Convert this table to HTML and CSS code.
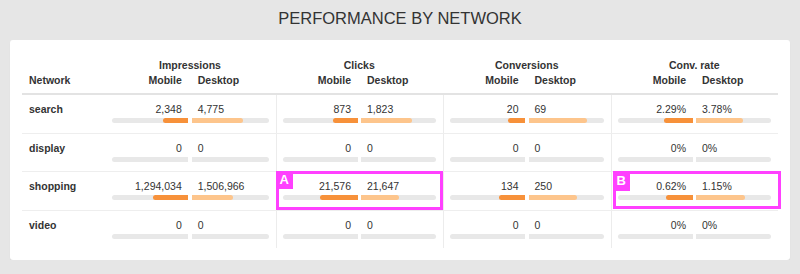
FILE: index.html
```html
<!DOCTYPE html>
<html>
<head>
<meta charset="utf-8">
<title>Performance by network</title>
<link rel="stylesheet" href="styles.css">
</head>
<body>
<h1 class="title">PERFORMANCE BY NETWORK</h1>
<div class="card">
  <div class="grid head">
    <div class="net-h">Network</div>
    <div class="grp first">
      <div class="grp-title">Impressions</div>
      <div class="pair"><div class="m">Mobile</div><div class="d">Desktop</div></div>
    </div>
    <div class="grp">
      <div class="grp-title">Clicks</div>
      <div class="pair"><div class="m">Mobile</div><div class="d">Desktop</div></div>
    </div>
    <div class="grp">
      <div class="grp-title">Conversions</div>
      <div class="pair"><div class="m">Mobile</div><div class="d">Desktop</div></div>
    </div>
    <div class="grp">
      <div class="grp-title">Conv. rate</div>
      <div class="pair"><div class="m">Mobile</div><div class="d">Desktop</div></div>
    </div>
  </div>

  <div class="grid row">
    <div class="net">search</div>
    <div class="grp first"><div class="pair">
      <div><div class="val m">2,348</div><div class="track tm"><div class="fill fm" style="width:32.96%"></div></div></div>
      <div><div class="val d">4,775</div><div class="track td"><div class="fill fd" style="width:67.04%"></div></div></div>
    </div></div>
    <div class="grp"><div class="pair">
      <div><div class="val m">873</div><div class="track tm"><div class="fill fm" style="width:32.38%"></div></div></div>
      <div><div class="val d">1,823</div><div class="track td"><div class="fill fd" style="width:67.62%"></div></div></div>
    </div></div>
    <div class="grp"><div class="pair">
      <div><div class="val m">20</div><div class="track tm"><div class="fill fm" style="width:22.47%"></div></div></div>
      <div><div class="val d">69</div><div class="track td"><div class="fill fd" style="width:77.53%"></div></div></div>
    </div></div>
    <div class="grp"><div class="pair">
      <div><div class="val m">2.29%</div><div class="track tm"><div class="fill fm" style="width:37.73%"></div></div></div>
      <div><div class="val d">3.78%</div><div class="track td"><div class="fill fd" style="width:62.27%"></div></div></div>
    </div></div>
  </div>

  <div class="grid row">
    <div class="net">display</div>
    <div class="grp first"><div class="pair">
      <div><div class="val m">0</div><div class="track tm"></div></div>
      <div><div class="val d">0</div><div class="track td"></div></div>
    </div></div>
    <div class="grp"><div class="pair">
      <div><div class="val m">0</div><div class="track tm"></div></div>
      <div><div class="val d">0</div><div class="track td"></div></div>
    </div></div>
    <div class="grp"><div class="pair">
      <div><div class="val m">0</div><div class="track tm"></div></div>
      <div><div class="val d">0</div><div class="track td"></div></div>
    </div></div>
    <div class="grp"><div class="pair">
      <div><div class="val m">0%</div><div class="track tm"></div></div>
      <div><div class="val d">0%</div><div class="track td"></div></div>
    </div></div>
  </div>

  <div class="grid row">
    <div class="net">shopping</div>
    <div class="grp first"><div class="pair">
      <div><div class="val m">1,294,034</div><div class="track tm"><div class="fill fm" style="width:46.2%"></div></div></div>
      <div><div class="val d">1,506,966</div><div class="track td"><div class="fill fd" style="width:53.8%"></div></div></div>
    </div></div>
    <div class="grp noted"><div class="pair">
      <div><div class="val m">21,576</div><div class="track tm"><div class="fill fm" style="width:49.92%"></div></div></div>
      <div><div class="val d">21,647</div><div class="track td"><div class="fill fd" style="width:50.08%"></div></div></div>
    </div>
      <div class="note note-a"><span class="tag">A</span></div>
    </div>
    <div class="grp"><div class="pair">
      <div><div class="val m">134</div><div class="track tm"><div class="fill fm" style="width:34.9%"></div></div></div>
      <div><div class="val d">250</div><div class="track td"><div class="fill fd" style="width:65.1%"></div></div></div>
    </div></div>
    <div class="grp noted"><div class="pair">
      <div><div class="val m">0.62%</div><div class="track tm"><div class="fill fm" style="width:35.03%"></div></div></div>
      <div><div class="val d">1.15%</div><div class="track td"><div class="fill fd" style="width:64.97%"></div></div></div>
    </div>
      <div class="note note-b"><span class="tag tag-b">B</span></div>
    </div>
  </div>

  <div class="grid row last">
    <div class="net">video</div>
    <div class="grp first"><div class="pair">
      <div><div class="val m">0</div><div class="track tm"></div></div>
      <div><div class="val d">0</div><div class="track td"></div></div>
    </div></div>
    <div class="grp"><div class="pair">
      <div><div class="val m">0</div><div class="track tm"></div></div>
      <div><div class="val d">0</div><div class="track td"></div></div>
    </div></div>
    <div class="grp"><div class="pair">
      <div><div class="val m">0</div><div class="track tm"></div></div>
      <div><div class="val d">0</div><div class="track td"></div></div>
    </div></div>
    <div class="grp"><div class="pair">
      <div><div class="val m">0%</div><div class="track tm"></div></div>
      <div><div class="val d">0%</div><div class="track td"></div></div>
    </div></div>
  </div>
</div>
</body>
</html>
```

FILE: styles.css
```css
* { box-sizing: border-box; }

html, body {
  margin: 0;
  padding: 0;
  background: #e6e6e6;
  font-family: "Liberation Sans", Arial, Helvetica, sans-serif;
  font-size: 10.5px;
  color: #333;
}

.title {
  margin: 0;
  height: 40px;
  line-height: 37px;
  text-align: center;
  font-size: 16.5px;
  font-weight: normal;
  color: #333;
}

.card {
  margin: 0 10px;
  background: #fff;
  border-radius: 3px;
  box-shadow: 0 1px 1px rgba(0, 0, 0, 0.08);
  padding: 12px 12px 12px 12px;
}

.grid {
  display: grid;
  grid-template-columns: 86px repeat(4, 1fr);
}

.head {
  padding: 6px 0 6px;
  border-bottom: 2px solid #e3e3e3;
  font-weight: bold;
  line-height: 14px;
}

.net-h {
  align-self: end;
  padding-left: 7px;
}

.grp {
  border-left: 1px solid #ececec;
  padding: 0 7px 0 6px;
}

.head .grp { border-left-color: transparent; }

.grp.first {
  border-left: 0;
  padding-left: 3.5px;
}

.grp-title {
  text-align: center;
  margin-bottom: 1px;
}

.pair {
  display: grid;
  grid-template-columns: 1fr 1fr;
  column-gap: 3.5px;
}

.m { text-align: right; padding-right: 6.5px; }
.d { text-align: left; padding-left: 6px; }

.row {
  height: 38.5px;
  border-bottom: 1px solid #eeeeee;
}
.row.last {
  height: 37.5px;
  border-bottom: 0;
}

.net {
  padding: 7px 0 0 7px;
  line-height: 14px;
  font-weight: bold;
}

.val {
  padding-top: 7px;
  line-height: 14px;
}

.track {
  margin-top: 2.2px;
  height: 5px;
  background: #e8e8e8;
  display: flex;
  overflow: hidden;
}
.tm {
  border-radius: 3px 0 0 3px;
  justify-content: flex-end;
}
.td {
  border-radius: 0 3px 3px 0;
  justify-content: flex-start;
}

.fill { height: 100%; }
.fm {
  background: #f7913a;
  border-radius: 3px 0 0 3px;
}
.fd {
  background: #fdc58c;
  border-radius: 0 3px 3px 0;
}

.noted { position: relative; }

.note {
  position: absolute;
  border: 3px solid #ff40ff;
  pointer-events: none;
}
.note-a {
  left: -1px;
  top: -1px;
  right: 0;
  bottom: 0;
}
.note-b {
  left: 1px;
  top: -1.5px;
  right: -3px;
  bottom: 0.5px;
}

.tag {
  position: absolute;
  left: -3px;
  top: -3px;
  width: 17.5px;
  height: 18px;
  background: #ff40ff;
  color: #fff;
  font-weight: bold;
  font-size: 13px;
  line-height: 18px;
  text-align: center;
}
.tag-b {
  height: 20px;
  line-height: 20px;
}
```
